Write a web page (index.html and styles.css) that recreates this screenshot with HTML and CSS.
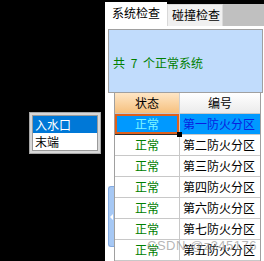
FILE: index.html
```html
<!DOCTYPE html>
<html lang="zh">
<head>
    <meta charset="UTF-8" />
    <title>系统检查</title>
    <link rel="stylesheet" href="styles.css">
</head>
<body>
    <div class="screen">
        <div class="left-side">
            <div class="dropdown">
                <ul class="dropdown-list">
                    <li class="selected">入水口</li>
                    <li>末端</li>
                </ul>
            </div>
        </div>
        <div class="panel">
            <div class="tabs">
                <div class="tab active">系统检查</div>
                <div class="tab">碰撞检查</div>
                <div class="tab-fill"></div>
            </div>
            <div class="summary">共 7 个正常系统</div>
            <div class="grid-area">
                <div class="handle-col">
                    <div class="handle"><span class="arrow"></span></div>
                </div>
                <div class="grid">
                    <div class="head head-state">状态</div>
                    <div class="head head-code">编号</div>

                    <div class="cell state sel current">正常</div>
                    <div class="cell code sel">第一防火分区</div>
                    <div class="cell state">正常</div>
                    <div class="cell code">第二防火分区</div>
                    <div class="cell state">正常</div>
                    <div class="cell code">第三防火分区</div>
                    <div class="cell state">正常</div>
                    <div class="cell code">第四防火分区</div>
                    <div class="cell state">正常</div>
                    <div class="cell code">第六防火分区</div>
                    <div class="cell state">正常</div>
                    <div class="cell code">第七防火分区</div>
                    <div class="cell state">正常</div>
                    <div class="cell code">第五防火分区</div>
                </div>
            </div>
        </div>
    </div>
    <div class="watermark">CSDN @z345176</div>
</body>
</html>
```

FILE: styles.css
```css
body {
    margin: 0;
    background: #000;
    font-family: "Noto Sans CJK SC", sans-serif;
    font-size: 12px;
    width: 264px;
    height: 261px;
    overflow: hidden;
    position: relative;
}
.screen {
    display: flex;
    height: 261px;
}
.left-side {
    width: 105px;
    position: relative;
}
.dropdown {
    position: absolute;
    left: 29px;
    top: 112px;
    width: 72px;
    box-sizing: border-box;
    border: 1px solid #a8a8a8;
    background: #d8d8d8;
    padding: 2px;
}
.dropdown-list {
    list-style: none;
    margin: 0;
    padding: 0;
    background: #fff;
    border: 1px solid #9a9a9a;
}
.dropdown-list li {
    height: 17px;
    line-height: 17px;
    padding-left: 2px;
    color: #000;
}
.dropdown-list li.selected {
    background: #0078d7;
    color: #fff;
}
.panel {
    width: 159px;
    background: #fff;
    display: flex;
    flex-direction: column;
}
.tabs {
    display: flex;
    align-items: flex-end;
    height: 26px;
    background: #000;
}
.tab {
    box-sizing: border-box;
    width: 56px;
    height: 22px;
    line-height: 20px;
    padding-left: 4px;
    background: #f0f0f0;
    border: 1px solid #d9d9d9;
    border-bottom: none;
    color: #000;
}
.tab.active {
    width: 62px;
    height: 24px;
    line-height: 22px;
    padding-left: 7px;
    background: #fff;
    border: none;
}
.tab-fill {
    flex: 1;
    height: 22px;
    background: #c0c0c0;
}
.summary {
    margin: 3px 1px 0 3px;
    height: 60px;
    border: 1px solid #a0a0a0;
    background: #c1dcfc;
    color: #008000;
    display: flex;
    align-items: center;
    padding-left: 4px;
    padding-top: 2px;
    word-spacing: 3px;
    box-sizing: content-box;
}
.grid-area {
    display: flex;
    margin-left: 3px;
    flex: 1;
}
.handle-col {
    width: 6px;
}
.handle {
    box-sizing: border-box;
    margin-top: 93px;
    height: 61px;
    width: 6px;
    background: #a6c8f4;
    border: 1px solid #84aae0;
    border-right: none;
    border-radius: 3px 0 0 3px;
    display: flex;
    align-items: center;
    justify-content: center;
}
.arrow {
    width: 0;
    height: 0;
    border-top: 3px solid transparent;
    border-bottom: 3px solid transparent;
    border-right: 3px solid #fff;
}
.grid {
    display: grid;
    grid-template-columns: 65px 80px;
    grid-auto-rows: 21px;
    border-left: 1px solid #a0a0a0;
    border-right: 1px solid #a0a0a0;
    align-self: flex-start;
}
.head,
.cell {
    box-sizing: border-box;
    border-bottom: 1px solid #c8c8c8;
    line-height: 20px;
}
.head {
    text-align: center;
    color: #000;
}
.head-state {
    background: linear-gradient(#fee6c6, #f6c07e);
    border-right: 1px solid #d0d0d0;
}
.head-code {
    background: linear-gradient(#ffffff, #ebebeb);
}
.cell.state {
    text-align: center;
    color: #008000;
    border-right: 1px solid #c8c8c8;
}
.cell.code {
    padding-left: 3px;
    color: #000;
}
.cell.sel {
    background: #0099ff;
    color: #0a1ee0;
}
.cell.state.sel {
    color: #7ff6ff;
}
.cell.current {
    position: relative;
    box-shadow: inset 0 0 0 2px #e0601c;
    border-bottom: 1px solid #303030;
}
.cell.current::after {
    content: "";
    position: absolute;
    right: -3px;
    bottom: -3px;
    width: 5px;
    height: 5px;
    background: #000;
}
.watermark {
    position: absolute;
    left: 147px;
    top: 238px;
    font-family: "Liberation Sans", sans-serif;
    font-size: 13px;
    color: rgba(150, 150, 150, 0.7);
    letter-spacing: 0.5px;
}
```
